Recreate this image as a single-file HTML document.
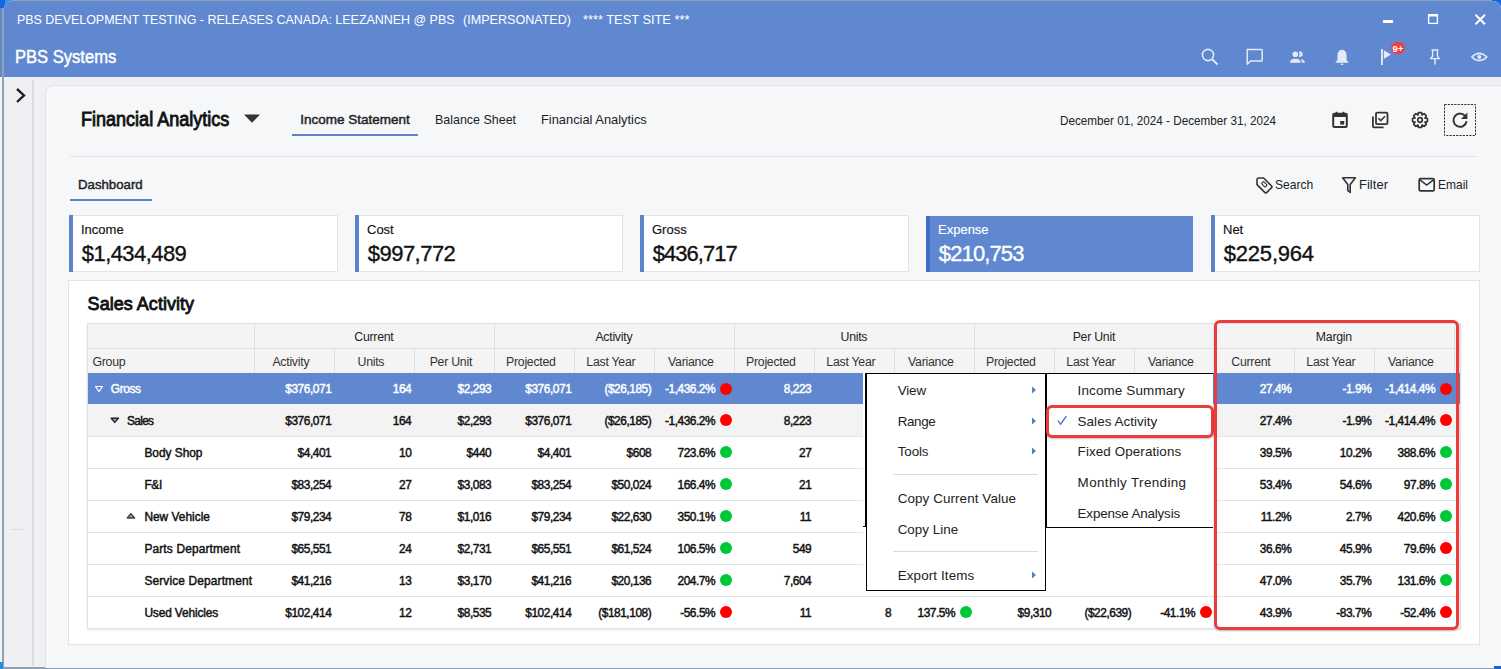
<!DOCTYPE html>
<html><head><meta charset="utf-8"><style>
html,body{margin:0;padding:0;}
body{width:1501px;height:669px;position:relative;overflow:hidden;font-family:"Liberation Sans",sans-serif;background:#f2f3f5}
.t{position:absolute;white-space:nowrap}
</style></head><body>
<div style="position:absolute;left:0px;top:0px;width:1501px;height:669px;background:#f2f3f5"></div>
<div style="position:absolute;left:0px;top:0px;width:1501px;height:669px;background:#f3f4f6"></div>
<div style="position:absolute;left:2px;top:0px;width:1499px;height:669px;background:#8fa2b2;border-top-left-radius:9px;border-top-right-radius:9px"></div>
<div style="position:absolute;left:0px;top:0px;width:11px;height:8px;background:#1565e0"></div>
<div style="position:absolute;left:5px;top:0px;width:6px;height:3px;background:#19a0f0"></div>
<div style="position:absolute;left:1492px;top:0px;width:9px;height:6px;background:#1565e0"></div>
<div style="position:absolute;left:4px;top:1px;width:1497px;height:666px;background:#eff0f3;border-top-left-radius:8px;border-top-right-radius:8px;overflow:hidden"></div>
<div style="position:absolute;left:4px;top:1px;width:1497px;height:76px;background:#6088d0;border-top-left-radius:8px;border-top-right-radius:8px"></div>
<div style="position:absolute;left:0px;top:8px;width:2px;height:69px;background:#6088d0"></div>
<div style="position:absolute;left:32px;top:80px;width:2px;height:586px;background:#dcdcdc"></div>
<div style="position:absolute;left:45px;top:85px;width:1470px;height:600px;background:#f6f7f9;border:1px solid #e0e2e6;border-radius:8px"></div>
<div class="t" style="left:16.50px;top:12.70px;font-size:13px;line-height:13px;font-weight:400;color:#fff;letter-spacing:0.000px;transform:scaleX(0.9573);transform-origin:0.00px 0;">PBS DEVELOPMENT TESTING - RELEASES CANADA: LEEZANNEH @ PBS</div>
<div class="t" style="left:463.00px;top:12.70px;font-size:13px;line-height:13px;font-weight:400;color:#fff;letter-spacing:0.000px;transform:scaleX(0.9669);transform-origin:0.00px 0;">(IMPERSONATED)</div>
<div class="t" style="left:583.00px;top:12.70px;font-size:13px;line-height:13px;font-weight:400;color:#fff;letter-spacing:0.000px;transform:scaleX(0.9861);transform-origin:0.00px 0;">**** TEST SITE ***</div>
<div class="t" style="left:14.70px;top:49.39px;font-size:17.5px;line-height:17.5px;font-weight:400;color:#fff;letter-spacing:0.000px;-webkit-text-stroke:0.7px #fff;transform:scaleX(0.9467);transform-origin:0.00px 0;-webkit-text-stroke:0.45px #fff;">PBS Systems</div>
<div class="t" style="left:81.00px;top:109.59px;font-size:19.5px;line-height:19.5px;font-weight:400;color:#111;letter-spacing:0.000px;-webkit-text-stroke:0.85px #111;transform:scaleX(0.9246);transform-origin:0.00px 0;">Financial Analytics</div>
<div class="t" style="left:300.30px;top:112.57px;font-size:13.5px;line-height:13.5px;font-weight:400;color:#222;letter-spacing:0.000px;transform:scaleX(1.0000);transform-origin:0.00px 0;-webkit-text-stroke:0.45px #222;">Income Statement</div>
<div class="t" style="left:435.00px;top:112.57px;font-size:13.5px;line-height:13.5px;font-weight:400;color:#222;letter-spacing:0.000px;transform:scaleX(0.9226);transform-origin:0.00px 0;">Balance Sheet</div>
<div class="t" style="left:540.80px;top:112.57px;font-size:13.5px;line-height:13.5px;font-weight:400;color:#222;letter-spacing:0.000px;transform:scaleX(0.9523);transform-origin:0.00px 0;">Financial Analytics</div>
<div style="position:absolute;left:292px;top:134px;width:126px;height:2px;background:#5b84cc"></div>
<div class="t" style="left:1060.00px;top:113.80px;font-size:13px;line-height:13px;font-weight:400;color:#222;letter-spacing:0.000px;transform:scaleX(0.9004);transform-origin:0.00px 0;">December 01, 2024 - December 31, 2024</div>
<div style="position:absolute;left:70px;top:156px;width:1408px;height:1px;background:#e3e4e8"></div>
<div class="t" style="left:78.40px;top:177.57px;font-size:13.5px;line-height:13.5px;font-weight:400;color:#222;letter-spacing:0.000px;transform:scaleX(0.9788);transform-origin:0.00px 0;-webkit-text-stroke:0.45px #222;">Dashboard</div>
<div style="position:absolute;left:70px;top:199px;width:82px;height:2px;background:#5b84cc"></div>
<div class="t" style="left:1274.70px;top:177.57px;font-size:13.5px;line-height:13.5px;font-weight:400;color:#222;letter-spacing:0.000px;transform:scaleX(0.8949);transform-origin:0.00px 0;">Search</div>
<div class="t" style="left:1359.00px;top:177.57px;font-size:13.5px;line-height:13.5px;font-weight:400;color:#222;letter-spacing:0.000px;transform:scaleX(0.9667);transform-origin:0.00px 0;">Filter</div>
<div class="t" style="left:1437.50px;top:177.57px;font-size:13.5px;line-height:13.5px;font-weight:400;color:#222;letter-spacing:0.000px;transform:scaleX(0.8876);transform-origin:0.00px 0;">Email</div>
<div style="position:absolute;left:69px;top:215px;width:269px;height:57px;background:#fff;border:1px solid #e3e4e8;box-sizing:border-box"></div>
<div style="position:absolute;left:69px;top:215px;width:4px;height:57px;background:#5b84cc"></div>
<div class="t" style="left:81.00px;top:223.00px;font-size:13px;line-height:13px;font-weight:400;color:#111;letter-spacing:0.000px;-webkit-text-stroke:0.15px #111;">Income</div>
<div class="t" style="left:81.80px;top:242.58px;font-size:22px;line-height:22px;font-weight:400;color:#111;letter-spacing:-0.567px;-webkit-text-stroke:0.35px #111;">$1,434,489</div>
<div style="position:absolute;left:355px;top:215px;width:268px;height:57px;background:#fff;border:1px solid #e3e4e8;box-sizing:border-box"></div>
<div style="position:absolute;left:355px;top:215px;width:4px;height:57px;background:#5b84cc"></div>
<div class="t" style="left:367.00px;top:223.00px;font-size:13px;line-height:13px;font-weight:400;color:#111;letter-spacing:0.000px;-webkit-text-stroke:0.15px #111;">Cost</div>
<div class="t" style="left:367.80px;top:242.58px;font-size:22px;line-height:22px;font-weight:400;color:#111;letter-spacing:-0.529px;-webkit-text-stroke:0.35px #111;">$997,772</div>
<div style="position:absolute;left:640px;top:215px;width:269px;height:57px;background:#fff;border:1px solid #e3e4e8;box-sizing:border-box"></div>
<div style="position:absolute;left:640px;top:215px;width:4px;height:57px;background:#5b84cc"></div>
<div class="t" style="left:652.00px;top:223.00px;font-size:13px;line-height:13px;font-weight:400;color:#111;letter-spacing:0.000px;-webkit-text-stroke:0.15px #111;">Gross</div>
<div class="t" style="left:652.80px;top:242.58px;font-size:22px;line-height:22px;font-weight:400;color:#111;letter-spacing:-0.971px;-webkit-text-stroke:0.35px #111;">$436,717</div>
<div style="position:absolute;left:926px;top:216px;width:267px;height:56px;background:#6088d0"></div>
<div style="position:absolute;left:926px;top:216px;width:4px;height:56px;background:#3f6cc4"></div>
<div class="t" style="left:938.00px;top:223.00px;font-size:13px;line-height:13px;font-weight:400;color:#fff;letter-spacing:0.000px;-webkit-text-stroke:0.15px #fff;">Expense</div>
<div class="t" style="left:938.80px;top:242.58px;font-size:22px;line-height:22px;font-weight:400;color:#fff;letter-spacing:-0.871px;-webkit-text-stroke:0.35px #fff;">$210,753</div>
<div style="position:absolute;left:1211px;top:215px;width:269px;height:57px;background:#fff;border:1px solid #e3e4e8;box-sizing:border-box"></div>
<div style="position:absolute;left:1211px;top:215px;width:4px;height:57px;background:#5b84cc"></div>
<div class="t" style="left:1223.00px;top:223.00px;font-size:13px;line-height:13px;font-weight:400;color:#111;letter-spacing:0.000px;-webkit-text-stroke:0.15px #111;">Net</div>
<div class="t" style="left:1223.80px;top:242.58px;font-size:22px;line-height:22px;font-weight:400;color:#111;letter-spacing:-0.214px;-webkit-text-stroke:0.35px #111;">$225,964</div>
<div style="position:absolute;left:68px;top:280px;width:1412px;height:364.5px;background:#fff;border:1px solid #e3e4e8;box-sizing:border-box"></div>
<div class="t" style="left:87.60px;top:294.96px;font-size:18px;line-height:18px;font-weight:400;color:#111;letter-spacing:0.031px;-webkit-text-stroke:0.85px #111;">Sales Activity</div>
<div style="position:absolute;left:87px;top:323px;width:1374px;height:306px;background:#fff;border:1px solid #e2e2e2;box-sizing:border-box;box-shadow:0 1px 2px rgba(0,0,0,0.10)"></div>
<div style="position:absolute;left:88px;top:324px;width:1372px;height:49px;background:#f5f4f4"></div>
<div style="position:absolute;left:88px;top:348px;width:1372px;height:1px;background:#e0e0e0"></div>
<div style="position:absolute;left:254px;top:324px;width:1px;height:49px;background:#e0e0e0"></div>
<div style="position:absolute;left:494px;top:324px;width:1px;height:49px;background:#e0e0e0"></div>
<div style="position:absolute;left:734px;top:324px;width:1px;height:49px;background:#e0e0e0"></div>
<div style="position:absolute;left:974px;top:324px;width:1px;height:49px;background:#e0e0e0"></div>
<div style="position:absolute;left:1214px;top:324px;width:1px;height:49px;background:#e0e0e0"></div>
<div style="position:absolute;left:334px;top:349px;width:1px;height:24px;background:#e0e0e0"></div>
<div style="position:absolute;left:414px;top:349px;width:1px;height:24px;background:#e0e0e0"></div>
<div style="position:absolute;left:574px;top:349px;width:1px;height:24px;background:#e0e0e0"></div>
<div style="position:absolute;left:654px;top:349px;width:1px;height:24px;background:#e0e0e0"></div>
<div style="position:absolute;left:814px;top:349px;width:1px;height:24px;background:#e0e0e0"></div>
<div style="position:absolute;left:894px;top:349px;width:1px;height:24px;background:#e0e0e0"></div>
<div style="position:absolute;left:1054px;top:349px;width:1px;height:24px;background:#e0e0e0"></div>
<div style="position:absolute;left:1134px;top:349px;width:1px;height:24px;background:#e0e0e0"></div>
<div style="position:absolute;left:1294px;top:349px;width:1px;height:24px;background:#e0e0e0"></div>
<div style="position:absolute;left:1374px;top:349px;width:1px;height:24px;background:#e0e0e0"></div>
<div style="position:absolute;left:1454px;top:324px;width:1px;height:49px;background:#e0e0e0"></div>
<div class="t" style="left:354.25px;top:331.09px;font-size:12.3px;line-height:12.3px;font-weight:400;color:#222;letter-spacing:-0.250px;">Current</div>
<div class="t" style="left:595.38px;top:331.09px;font-size:12.3px;line-height:12.3px;font-weight:400;color:#222;letter-spacing:-0.250px;">Activity</div>
<div class="t" style="left:840.50px;top:331.09px;font-size:12.3px;line-height:12.3px;font-weight:400;color:#222;letter-spacing:-0.250px;">Units</div>
<div class="t" style="left:1072.67px;top:331.09px;font-size:12.3px;line-height:12.3px;font-weight:400;color:#222;letter-spacing:-0.250px;">Per Unit</div>
<div class="t" style="left:1315.83px;top:331.09px;font-size:12.3px;line-height:12.3px;font-weight:400;color:#222;letter-spacing:-0.250px;">Margin</div>
<div class="t" style="left:272.38px;top:356.09px;font-size:12.3px;line-height:12.3px;font-weight:400;color:#333;letter-spacing:-0.250px;">Activity</div>
<div class="t" style="left:357.50px;top:356.09px;font-size:12.3px;line-height:12.3px;font-weight:400;color:#333;letter-spacing:-0.250px;">Units</div>
<div class="t" style="left:429.68px;top:356.09px;font-size:12.3px;line-height:12.3px;font-weight:400;color:#333;letter-spacing:-0.250px;">Per Unit</div>
<div class="t" style="left:506.00px;top:356.09px;font-size:12.3px;line-height:12.3px;font-weight:400;color:#333;letter-spacing:-0.250px;">Projected</div>
<div class="t" style="left:586.35px;top:356.09px;font-size:12.3px;line-height:12.3px;font-weight:400;color:#333;letter-spacing:-0.250px;">Last Year</div>
<div class="t" style="left:668.08px;top:356.09px;font-size:12.3px;line-height:12.3px;font-weight:400;color:#333;letter-spacing:-0.250px;">Variance</div>
<div class="t" style="left:746.00px;top:356.09px;font-size:12.3px;line-height:12.3px;font-weight:400;color:#333;letter-spacing:-0.250px;">Projected</div>
<div class="t" style="left:826.35px;top:356.09px;font-size:12.3px;line-height:12.3px;font-weight:400;color:#333;letter-spacing:-0.250px;">Last Year</div>
<div class="t" style="left:908.08px;top:356.09px;font-size:12.3px;line-height:12.3px;font-weight:400;color:#333;letter-spacing:-0.250px;">Variance</div>
<div class="t" style="left:986.00px;top:356.09px;font-size:12.3px;line-height:12.3px;font-weight:400;color:#333;letter-spacing:-0.250px;">Projected</div>
<div class="t" style="left:1066.35px;top:356.09px;font-size:12.3px;line-height:12.3px;font-weight:400;color:#333;letter-spacing:-0.250px;">Last Year</div>
<div class="t" style="left:1148.08px;top:356.09px;font-size:12.3px;line-height:12.3px;font-weight:400;color:#333;letter-spacing:-0.250px;">Variance</div>
<div class="t" style="left:1231.25px;top:356.09px;font-size:12.3px;line-height:12.3px;font-weight:400;color:#333;letter-spacing:-0.250px;">Current</div>
<div class="t" style="left:1306.35px;top:356.09px;font-size:12.3px;line-height:12.3px;font-weight:400;color:#333;letter-spacing:-0.250px;">Last Year</div>
<div class="t" style="left:1388.08px;top:356.09px;font-size:12.3px;line-height:12.3px;font-weight:400;color:#333;letter-spacing:-0.250px;">Variance</div>
<div class="t" style="left:92.40px;top:356.09px;font-size:12.3px;line-height:12.3px;font-weight:400;color:#333;letter-spacing:-0.250px;">Group</div>
<div style="position:absolute;left:88px;top:373px;width:1372px;height:31px;background:#6088d0"></div>
<div class="t" style="left:110.80px;top:384.13px;font-size:11.9px;line-height:11.9px;font-weight:400;color:#fff;letter-spacing:-0.375px;-webkit-text-stroke:0.45px #fff;">Gross</div>
<svg style="position:absolute;left:95.3px;top:385.5px" width="8" height="6"><path d="M0.5 0.5 L7.5 0.5 L4 5.5 Z" fill="none" stroke="#fff" stroke-width="1.2"/></svg>
<div class="t" style="right:1169.71px;top:384.13px;font-size:11.9px;line-height:11.9px;font-weight:400;color:#fff;letter-spacing:-0.450px;-webkit-text-stroke:0.45px #fff;">$376,071</div>
<div class="t" style="right:1089.79px;top:384.13px;font-size:11.9px;line-height:11.9px;font-weight:400;color:#fff;letter-spacing:-0.450px;-webkit-text-stroke:0.45px #fff;">164</div>
<div class="t" style="right:1009.75px;top:384.13px;font-size:11.9px;line-height:11.9px;font-weight:400;color:#fff;letter-spacing:-0.450px;-webkit-text-stroke:0.45px #fff;">$2,293</div>
<div class="t" style="right:929.71px;top:384.13px;font-size:11.9px;line-height:11.9px;font-weight:400;color:#fff;letter-spacing:-0.450px;-webkit-text-stroke:0.45px #fff;">$376,071</div>
<div class="t" style="right:849.71px;top:384.13px;font-size:11.9px;line-height:11.9px;font-weight:400;color:#fff;letter-spacing:-0.450px;-webkit-text-stroke:0.45px #fff;">($26,185)</div>
<div style="position:absolute;left:720px;top:382.5px;width:12px;height:12px;border-radius:50%;background:#ff0000"></div>
<div class="t" style="right:785.90px;top:384.13px;font-size:11.9px;line-height:11.9px;font-weight:400;color:#fff;letter-spacing:-0.450px;-webkit-text-stroke:0.45px #fff;">-1,436.2%</div>
<div class="t" style="right:689.77px;top:384.13px;font-size:11.9px;line-height:11.9px;font-weight:400;color:#fff;letter-spacing:-0.450px;-webkit-text-stroke:0.45px #fff;">8,223</div>
<div class="t" style="right:209.71px;top:384.13px;font-size:11.9px;line-height:11.9px;font-weight:400;color:#fff;letter-spacing:-0.450px;-webkit-text-stroke:0.45px #fff;">27.4%</div>
<div class="t" style="right:129.76px;top:384.13px;font-size:11.9px;line-height:11.9px;font-weight:400;color:#fff;letter-spacing:-0.450px;-webkit-text-stroke:0.45px #fff;">-1.9%</div>
<div style="position:absolute;left:1440px;top:382.5px;width:12px;height:12px;border-radius:50%;background:#ff0000"></div>
<div class="t" style="right:65.90px;top:384.13px;font-size:11.9px;line-height:11.9px;font-weight:400;color:#fff;letter-spacing:-0.450px;-webkit-text-stroke:0.45px #fff;">-1,414.4%</div>
<div style="position:absolute;left:88px;top:404px;width:1372px;height:32px;background:#f3f3f3"></div>
<div style="position:absolute;left:88px;top:436px;width:1372px;height:1px;background:#e3e3e3"></div>
<div class="t" style="left:127.00px;top:415.53px;font-size:11.9px;line-height:11.9px;font-weight:400;color:#111;letter-spacing:-0.675px;-webkit-text-stroke:0.45px #111;">Sales</div>
<svg style="position:absolute;left:109.9px;top:416.8px" width="10" height="7"><path d="M1.2 1.2 L8.4 1.2 L4.8 5.4 Z" fill="#aaa" stroke="#222" stroke-width="1.4" stroke-linejoin="round"/></svg>
<div class="t" style="right:1169.71px;top:415.53px;font-size:11.9px;line-height:11.9px;font-weight:400;color:#111;letter-spacing:-0.450px;-webkit-text-stroke:0.45px #111;">$376,071</div>
<div class="t" style="right:1089.79px;top:415.53px;font-size:11.9px;line-height:11.9px;font-weight:400;color:#111;letter-spacing:-0.450px;-webkit-text-stroke:0.45px #111;">164</div>
<div class="t" style="right:1009.75px;top:415.53px;font-size:11.9px;line-height:11.9px;font-weight:400;color:#111;letter-spacing:-0.450px;-webkit-text-stroke:0.45px #111;">$2,293</div>
<div class="t" style="right:929.71px;top:415.53px;font-size:11.9px;line-height:11.9px;font-weight:400;color:#111;letter-spacing:-0.450px;-webkit-text-stroke:0.45px #111;">$376,071</div>
<div class="t" style="right:849.71px;top:415.53px;font-size:11.9px;line-height:11.9px;font-weight:400;color:#111;letter-spacing:-0.450px;-webkit-text-stroke:0.45px #111;">($26,185)</div>
<div style="position:absolute;left:720px;top:414.0px;width:12px;height:12px;border-radius:50%;background:#ff0000"></div>
<div class="t" style="right:785.90px;top:415.53px;font-size:11.9px;line-height:11.9px;font-weight:400;color:#111;letter-spacing:-0.450px;-webkit-text-stroke:0.45px #111;">-1,436.2%</div>
<div class="t" style="right:689.77px;top:415.53px;font-size:11.9px;line-height:11.9px;font-weight:400;color:#111;letter-spacing:-0.450px;-webkit-text-stroke:0.45px #111;">8,223</div>
<div class="t" style="right:209.71px;top:415.53px;font-size:11.9px;line-height:11.9px;font-weight:400;color:#111;letter-spacing:-0.450px;-webkit-text-stroke:0.45px #111;">27.4%</div>
<div class="t" style="right:129.76px;top:415.53px;font-size:11.9px;line-height:11.9px;font-weight:400;color:#111;letter-spacing:-0.450px;-webkit-text-stroke:0.45px #111;">-1.9%</div>
<div style="position:absolute;left:1440px;top:414.0px;width:12px;height:12px;border-radius:50%;background:#ff0000"></div>
<div class="t" style="right:65.90px;top:415.53px;font-size:11.9px;line-height:11.9px;font-weight:400;color:#111;letter-spacing:-0.450px;-webkit-text-stroke:0.45px #111;">-1,414.4%</div>
<div style="position:absolute;left:88px;top:468px;width:1372px;height:1px;background:#e3e3e3"></div>
<div class="t" style="left:144.40px;top:447.53px;font-size:11.9px;line-height:11.9px;font-weight:400;color:#111;letter-spacing:-0.013px;-webkit-text-stroke:0.45px #111;">Body Shop</div>
<div class="t" style="right:1169.75px;top:447.53px;font-size:11.9px;line-height:11.9px;font-weight:400;color:#111;letter-spacing:-0.450px;-webkit-text-stroke:0.45px #111;">$4,401</div>
<div class="t" style="right:1089.71px;top:447.53px;font-size:11.9px;line-height:11.9px;font-weight:400;color:#111;letter-spacing:-0.450px;-webkit-text-stroke:0.45px #111;">10</div>
<div class="t" style="right:1009.77px;top:447.53px;font-size:11.9px;line-height:11.9px;font-weight:400;color:#111;letter-spacing:-0.450px;-webkit-text-stroke:0.45px #111;">$440</div>
<div class="t" style="right:929.75px;top:447.53px;font-size:11.9px;line-height:11.9px;font-weight:400;color:#111;letter-spacing:-0.450px;-webkit-text-stroke:0.45px #111;">$4,401</div>
<div class="t" style="right:849.77px;top:447.53px;font-size:11.9px;line-height:11.9px;font-weight:400;color:#111;letter-spacing:-0.450px;-webkit-text-stroke:0.45px #111;">$608</div>
<div style="position:absolute;left:720px;top:446.0px;width:12px;height:12px;border-radius:50%;background:#00c832"></div>
<div class="t" style="right:785.89px;top:447.53px;font-size:11.9px;line-height:11.9px;font-weight:400;color:#111;letter-spacing:-0.450px;-webkit-text-stroke:0.45px #111;">723.6%</div>
<div class="t" style="right:689.71px;top:447.53px;font-size:11.9px;line-height:11.9px;font-weight:400;color:#111;letter-spacing:-0.450px;-webkit-text-stroke:0.45px #111;">27</div>
<div class="t" style="right:209.71px;top:447.53px;font-size:11.9px;line-height:11.9px;font-weight:400;color:#111;letter-spacing:-0.450px;-webkit-text-stroke:0.45px #111;">39.5%</div>
<div class="t" style="right:129.71px;top:447.53px;font-size:11.9px;line-height:11.9px;font-weight:400;color:#111;letter-spacing:-0.450px;-webkit-text-stroke:0.45px #111;">10.2%</div>
<div style="position:absolute;left:1440px;top:446.0px;width:12px;height:12px;border-radius:50%;background:#00c832"></div>
<div class="t" style="right:65.89px;top:447.53px;font-size:11.9px;line-height:11.9px;font-weight:400;color:#111;letter-spacing:-0.450px;-webkit-text-stroke:0.45px #111;">388.6%</div>
<div style="position:absolute;left:88px;top:500px;width:1372px;height:1px;background:#e3e3e3"></div>
<div class="t" style="left:144.40px;top:479.53px;font-size:11.9px;line-height:11.9px;font-weight:400;color:#111;letter-spacing:-0.300px;-webkit-text-stroke:0.45px #111;">F&amp;I</div>
<div class="t" style="right:1169.73px;top:479.53px;font-size:11.9px;line-height:11.9px;font-weight:400;color:#111;letter-spacing:-0.450px;-webkit-text-stroke:0.45px #111;">$83,254</div>
<div class="t" style="right:1089.71px;top:479.53px;font-size:11.9px;line-height:11.9px;font-weight:400;color:#111;letter-spacing:-0.450px;-webkit-text-stroke:0.45px #111;">27</div>
<div class="t" style="right:1009.75px;top:479.53px;font-size:11.9px;line-height:11.9px;font-weight:400;color:#111;letter-spacing:-0.450px;-webkit-text-stroke:0.45px #111;">$3,083</div>
<div class="t" style="right:929.73px;top:479.53px;font-size:11.9px;line-height:11.9px;font-weight:400;color:#111;letter-spacing:-0.450px;-webkit-text-stroke:0.45px #111;">$83,254</div>
<div class="t" style="right:849.73px;top:479.53px;font-size:11.9px;line-height:11.9px;font-weight:400;color:#111;letter-spacing:-0.450px;-webkit-text-stroke:0.45px #111;">$50,024</div>
<div style="position:absolute;left:720px;top:478.0px;width:12px;height:12px;border-radius:50%;background:#00c832"></div>
<div class="t" style="right:785.89px;top:479.53px;font-size:11.9px;line-height:11.9px;font-weight:400;color:#111;letter-spacing:-0.450px;-webkit-text-stroke:0.45px #111;">166.4%</div>
<div class="t" style="right:689.71px;top:479.53px;font-size:11.9px;line-height:11.9px;font-weight:400;color:#111;letter-spacing:-0.450px;-webkit-text-stroke:0.45px #111;">21</div>
<div class="t" style="right:209.71px;top:479.53px;font-size:11.9px;line-height:11.9px;font-weight:400;color:#111;letter-spacing:-0.450px;-webkit-text-stroke:0.45px #111;">53.4%</div>
<div class="t" style="right:129.71px;top:479.53px;font-size:11.9px;line-height:11.9px;font-weight:400;color:#111;letter-spacing:-0.450px;-webkit-text-stroke:0.45px #111;">54.6%</div>
<div style="position:absolute;left:1440px;top:478.0px;width:12px;height:12px;border-radius:50%;background:#00c832"></div>
<div class="t" style="right:65.81px;top:479.53px;font-size:11.9px;line-height:11.9px;font-weight:400;color:#111;letter-spacing:-0.450px;-webkit-text-stroke:0.45px #111;">97.8%</div>
<div style="position:absolute;left:88px;top:532px;width:1372px;height:1px;background:#e3e3e3"></div>
<div class="t" style="left:144.40px;top:511.53px;font-size:11.9px;line-height:11.9px;font-weight:400;color:#111;letter-spacing:0.010px;-webkit-text-stroke:0.45px #111;">New Vehicle</div>
<svg style="position:absolute;left:126.2px;top:512.2px" width="10" height="8"><path d="M1.2 6 L8.6 6 L4.9 1.6 Z" fill="#999" stroke="#444" stroke-width="1.4" stroke-linejoin="round"/></svg>
<div class="t" style="right:1169.73px;top:511.53px;font-size:11.9px;line-height:11.9px;font-weight:400;color:#111;letter-spacing:-0.450px;-webkit-text-stroke:0.45px #111;">$79,234</div>
<div class="t" style="right:1089.71px;top:511.53px;font-size:11.9px;line-height:11.9px;font-weight:400;color:#111;letter-spacing:-0.450px;-webkit-text-stroke:0.45px #111;">78</div>
<div class="t" style="right:1009.75px;top:511.53px;font-size:11.9px;line-height:11.9px;font-weight:400;color:#111;letter-spacing:-0.450px;-webkit-text-stroke:0.45px #111;">$1,016</div>
<div class="t" style="right:929.73px;top:511.53px;font-size:11.9px;line-height:11.9px;font-weight:400;color:#111;letter-spacing:-0.450px;-webkit-text-stroke:0.45px #111;">$79,234</div>
<div class="t" style="right:849.73px;top:511.53px;font-size:11.9px;line-height:11.9px;font-weight:400;color:#111;letter-spacing:-0.450px;-webkit-text-stroke:0.45px #111;">$22,630</div>
<div style="position:absolute;left:720px;top:510.0px;width:12px;height:12px;border-radius:50%;background:#00c832"></div>
<div class="t" style="right:785.89px;top:511.53px;font-size:11.9px;line-height:11.9px;font-weight:400;color:#111;letter-spacing:-0.450px;-webkit-text-stroke:0.45px #111;">350.1%</div>
<div class="t" style="right:689.80px;top:511.53px;font-size:11.9px;line-height:11.9px;font-weight:400;color:#111;letter-spacing:-0.450px;-webkit-text-stroke:0.45px #111;">11</div>
<div class="t" style="right:209.79px;top:511.53px;font-size:11.9px;line-height:11.9px;font-weight:400;color:#111;letter-spacing:-0.450px;-webkit-text-stroke:0.45px #111;">11.2%</div>
<div class="t" style="right:129.72px;top:511.53px;font-size:11.9px;line-height:11.9px;font-weight:400;color:#111;letter-spacing:-0.450px;-webkit-text-stroke:0.45px #111;">2.7%</div>
<div style="position:absolute;left:1440px;top:510.0px;width:12px;height:12px;border-radius:50%;background:#00c832"></div>
<div class="t" style="right:65.89px;top:511.53px;font-size:11.9px;line-height:11.9px;font-weight:400;color:#111;letter-spacing:-0.450px;-webkit-text-stroke:0.45px #111;">420.6%</div>
<div style="position:absolute;left:88px;top:564px;width:1372px;height:1px;background:#e3e3e3"></div>
<div class="t" style="left:144.40px;top:543.53px;font-size:11.9px;line-height:11.9px;font-weight:400;color:#111;letter-spacing:0.160px;-webkit-text-stroke:0.45px #111;">Parts Department</div>
<div class="t" style="right:1169.73px;top:543.53px;font-size:11.9px;line-height:11.9px;font-weight:400;color:#111;letter-spacing:-0.450px;-webkit-text-stroke:0.45px #111;">$65,551</div>
<div class="t" style="right:1089.71px;top:543.53px;font-size:11.9px;line-height:11.9px;font-weight:400;color:#111;letter-spacing:-0.450px;-webkit-text-stroke:0.45px #111;">24</div>
<div class="t" style="right:1009.75px;top:543.53px;font-size:11.9px;line-height:11.9px;font-weight:400;color:#111;letter-spacing:-0.450px;-webkit-text-stroke:0.45px #111;">$2,731</div>
<div class="t" style="right:929.73px;top:543.53px;font-size:11.9px;line-height:11.9px;font-weight:400;color:#111;letter-spacing:-0.450px;-webkit-text-stroke:0.45px #111;">$65,551</div>
<div class="t" style="right:849.73px;top:543.53px;font-size:11.9px;line-height:11.9px;font-weight:400;color:#111;letter-spacing:-0.450px;-webkit-text-stroke:0.45px #111;">$61,524</div>
<div style="position:absolute;left:720px;top:542.0px;width:12px;height:12px;border-radius:50%;background:#00c832"></div>
<div class="t" style="right:785.89px;top:543.53px;font-size:11.9px;line-height:11.9px;font-weight:400;color:#111;letter-spacing:-0.450px;-webkit-text-stroke:0.45px #111;">106.5%</div>
<div class="t" style="right:689.79px;top:543.53px;font-size:11.9px;line-height:11.9px;font-weight:400;color:#111;letter-spacing:-0.450px;-webkit-text-stroke:0.45px #111;">549</div>
<div class="t" style="right:209.71px;top:543.53px;font-size:11.9px;line-height:11.9px;font-weight:400;color:#111;letter-spacing:-0.450px;-webkit-text-stroke:0.45px #111;">36.6%</div>
<div class="t" style="right:129.71px;top:543.53px;font-size:11.9px;line-height:11.9px;font-weight:400;color:#111;letter-spacing:-0.450px;-webkit-text-stroke:0.45px #111;">45.9%</div>
<div style="position:absolute;left:1440px;top:542.0px;width:12px;height:12px;border-radius:50%;background:#ff0000"></div>
<div class="t" style="right:65.81px;top:543.53px;font-size:11.9px;line-height:11.9px;font-weight:400;color:#111;letter-spacing:-0.450px;-webkit-text-stroke:0.45px #111;">79.6%</div>
<div style="position:absolute;left:88px;top:596px;width:1372px;height:1px;background:#e3e3e3"></div>
<div class="t" style="left:144.40px;top:575.53px;font-size:11.9px;line-height:11.9px;font-weight:400;color:#111;letter-spacing:0.147px;-webkit-text-stroke:0.45px #111;">Service Department</div>
<div class="t" style="right:1169.73px;top:575.53px;font-size:11.9px;line-height:11.9px;font-weight:400;color:#111;letter-spacing:-0.450px;-webkit-text-stroke:0.45px #111;">$41,216</div>
<div class="t" style="right:1089.71px;top:575.53px;font-size:11.9px;line-height:11.9px;font-weight:400;color:#111;letter-spacing:-0.450px;-webkit-text-stroke:0.45px #111;">13</div>
<div class="t" style="right:1009.75px;top:575.53px;font-size:11.9px;line-height:11.9px;font-weight:400;color:#111;letter-spacing:-0.450px;-webkit-text-stroke:0.45px #111;">$3,170</div>
<div class="t" style="right:929.73px;top:575.53px;font-size:11.9px;line-height:11.9px;font-weight:400;color:#111;letter-spacing:-0.450px;-webkit-text-stroke:0.45px #111;">$41,216</div>
<div class="t" style="right:849.73px;top:575.53px;font-size:11.9px;line-height:11.9px;font-weight:400;color:#111;letter-spacing:-0.450px;-webkit-text-stroke:0.45px #111;">$20,136</div>
<div style="position:absolute;left:720px;top:574.0px;width:12px;height:12px;border-radius:50%;background:#00c832"></div>
<div class="t" style="right:785.89px;top:575.53px;font-size:11.9px;line-height:11.9px;font-weight:400;color:#111;letter-spacing:-0.450px;-webkit-text-stroke:0.45px #111;">204.7%</div>
<div class="t" style="right:689.77px;top:575.53px;font-size:11.9px;line-height:11.9px;font-weight:400;color:#111;letter-spacing:-0.450px;-webkit-text-stroke:0.45px #111;">7,604</div>
<div class="t" style="right:209.71px;top:575.53px;font-size:11.9px;line-height:11.9px;font-weight:400;color:#111;letter-spacing:-0.450px;-webkit-text-stroke:0.45px #111;">47.0%</div>
<div class="t" style="right:129.71px;top:575.53px;font-size:11.9px;line-height:11.9px;font-weight:400;color:#111;letter-spacing:-0.450px;-webkit-text-stroke:0.45px #111;">35.7%</div>
<div style="position:absolute;left:1440px;top:574.0px;width:12px;height:12px;border-radius:50%;background:#00c832"></div>
<div class="t" style="right:65.89px;top:575.53px;font-size:11.9px;line-height:11.9px;font-weight:400;color:#111;letter-spacing:-0.450px;-webkit-text-stroke:0.45px #111;">131.6%</div>
<div style="position:absolute;left:88px;top:628px;width:1372px;height:1px;background:#e3e3e3"></div>
<div class="t" style="left:144.40px;top:607.53px;font-size:11.9px;line-height:11.9px;font-weight:400;color:#111;letter-spacing:-0.133px;-webkit-text-stroke:0.45px #111;">Used Vehicles</div>
<div class="t" style="right:1169.71px;top:607.53px;font-size:11.9px;line-height:11.9px;font-weight:400;color:#111;letter-spacing:-0.450px;-webkit-text-stroke:0.45px #111;">$102,414</div>
<div class="t" style="right:1089.71px;top:607.53px;font-size:11.9px;line-height:11.9px;font-weight:400;color:#111;letter-spacing:-0.450px;-webkit-text-stroke:0.45px #111;">12</div>
<div class="t" style="right:1009.75px;top:607.53px;font-size:11.9px;line-height:11.9px;font-weight:400;color:#111;letter-spacing:-0.450px;-webkit-text-stroke:0.45px #111;">$8,535</div>
<div class="t" style="right:929.71px;top:607.53px;font-size:11.9px;line-height:11.9px;font-weight:400;color:#111;letter-spacing:-0.450px;-webkit-text-stroke:0.45px #111;">$102,414</div>
<div class="t" style="right:849.79px;top:607.53px;font-size:11.9px;line-height:11.9px;font-weight:400;color:#111;letter-spacing:-0.450px;-webkit-text-stroke:0.45px #111;">($181,108)</div>
<div style="position:absolute;left:720px;top:606.0px;width:12px;height:12px;border-radius:50%;background:#ff0000"></div>
<div class="t" style="right:785.84px;top:607.53px;font-size:11.9px;line-height:11.9px;font-weight:400;color:#111;letter-spacing:-0.450px;-webkit-text-stroke:0.45px #111;">-56.5%</div>
<div class="t" style="right:689.80px;top:607.53px;font-size:11.9px;line-height:11.9px;font-weight:400;color:#111;letter-spacing:-0.450px;-webkit-text-stroke:0.45px #111;">11</div>
<div class="t" style="right:609.73px;top:607.53px;font-size:11.9px;line-height:11.9px;font-weight:400;color:#111;letter-spacing:-0.450px;-webkit-text-stroke:0.45px #111;">8</div>
<div style="position:absolute;left:960px;top:606.0px;width:12px;height:12px;border-radius:50%;background:#00c832"></div>
<div class="t" style="right:545.89px;top:607.53px;font-size:11.9px;line-height:11.9px;font-weight:400;color:#111;letter-spacing:-0.450px;-webkit-text-stroke:0.45px #111;">137.5%</div>
<div class="t" style="right:449.75px;top:607.53px;font-size:11.9px;line-height:11.9px;font-weight:400;color:#111;letter-spacing:-0.450px;-webkit-text-stroke:0.45px #111;">$9,310</div>
<div class="t" style="right:369.71px;top:607.53px;font-size:11.9px;line-height:11.9px;font-weight:400;color:#111;letter-spacing:-0.450px;-webkit-text-stroke:0.45px #111;">($22,639)</div>
<div style="position:absolute;left:1200px;top:606.0px;width:12px;height:12px;border-radius:50%;background:#ff0000"></div>
<div class="t" style="right:305.84px;top:607.53px;font-size:11.9px;line-height:11.9px;font-weight:400;color:#111;letter-spacing:-0.450px;-webkit-text-stroke:0.45px #111;">-41.1%</div>
<div class="t" style="right:209.71px;top:607.53px;font-size:11.9px;line-height:11.9px;font-weight:400;color:#111;letter-spacing:-0.450px;-webkit-text-stroke:0.45px #111;">43.9%</div>
<div class="t" style="right:129.74px;top:607.53px;font-size:11.9px;line-height:11.9px;font-weight:400;color:#111;letter-spacing:-0.450px;-webkit-text-stroke:0.45px #111;">-83.7%</div>
<div style="position:absolute;left:1440px;top:606.0px;width:12px;height:12px;border-radius:50%;background:#ff0000"></div>
<div class="t" style="right:65.84px;top:607.53px;font-size:11.9px;line-height:11.9px;font-weight:400;color:#111;letter-spacing:-0.450px;-webkit-text-stroke:0.45px #111;">-52.4%</div>
<div style="position:absolute;left:863px;top:373px;width:350px;height:218px;background:#fff"></div>
<div style="position:absolute;left:866px;top:373px;width:180px;height:218px;border:1px solid #000;box-sizing:border-box;background:#fff"></div>
<div style="position:absolute;left:865px;top:373px;width:1px;height:154px;background:#000"></div>
<div style="position:absolute;left:863px;top:526px;width:3px;height:1px;background:#000"></div>
<div style="position:absolute;left:1045px;top:373px;width:168px;height:155px;border-top:1px solid #000;border-bottom:1px solid #000;border-left:2px solid #000;box-sizing:border-box;background:#fff"></div>
<div class="t" style="left:897.70px;top:384.26px;font-size:13.4px;line-height:13.4px;font-weight:400;color:#222;letter-spacing:-0.133px;">View</div>
<div class="t" style="left:897.70px;top:415.06px;font-size:13.4px;line-height:13.4px;font-weight:400;color:#222;letter-spacing:-0.350px;">Range</div>
<div class="t" style="left:897.70px;top:445.06px;font-size:13.4px;line-height:13.4px;font-weight:400;color:#222;letter-spacing:-0.100px;">Tools</div>
<div class="t" style="left:897.70px;top:492.16px;font-size:13.4px;line-height:13.4px;font-weight:400;color:#222;letter-spacing:0.100px;">Copy Current Value</div>
<div class="t" style="left:897.70px;top:523.06px;font-size:13.4px;line-height:13.4px;font-weight:400;color:#222;letter-spacing:0.013px;">Copy Line</div>
<div class="t" style="left:897.70px;top:568.76px;font-size:13.4px;line-height:13.4px;font-weight:400;color:#222;letter-spacing:0.127px;">Export Items</div>
<svg style="position:absolute;left:1032px;top:386.3px" width="5" height="8"><path d="M0 0.5 L4 4 L0 7.5 Z" fill="#4f7fd0"/></svg>
<svg style="position:absolute;left:1032px;top:416.9px" width="5" height="8"><path d="M0 0.5 L4 4 L0 7.5 Z" fill="#4f7fd0"/></svg>
<svg style="position:absolute;left:1032px;top:447.1px" width="5" height="8"><path d="M0 0.5 L4 4 L0 7.5 Z" fill="#4f7fd0"/></svg>
<svg style="position:absolute;left:1032px;top:570.8px" width="5" height="8"><path d="M0 0.5 L4 4 L0 7.5 Z" fill="#4f7fd0"/></svg>
<div style="position:absolute;left:893px;top:474px;width:145px;height:1px;background:#d9d9d9"></div>
<div style="position:absolute;left:893px;top:551px;width:145px;height:1px;background:#d9d9d9"></div>
<div class="t" style="left:1077.60px;top:384.26px;font-size:13.4px;line-height:13.4px;font-weight:400;color:#222;letter-spacing:0.162px;">Income Summary</div>
<div class="t" style="left:1077.60px;top:415.06px;font-size:13.4px;line-height:13.4px;font-weight:400;color:#222;letter-spacing:0.062px;">Sales Activity</div>
<div class="t" style="left:1077.60px;top:445.06px;font-size:13.4px;line-height:13.4px;font-weight:400;color:#222;letter-spacing:0.107px;">Fixed Operations</div>
<div class="t" style="left:1077.60px;top:475.66px;font-size:13.4px;line-height:13.4px;font-weight:400;color:#222;letter-spacing:0.380px;">Monthly Trending</div>
<div class="t" style="left:1077.60px;top:506.56px;font-size:13.4px;line-height:13.4px;font-weight:400;color:#222;letter-spacing:-0.160px;">Expense Analysis</div>
<div style="position:absolute;left:1046px;top:405px;width:168px;height:33px;border:3px solid #ea3c3c;border-radius:6px;box-sizing:border-box;box-shadow:0 1px 2px rgba(0,0,0,0.25)"></div>
<div style="position:absolute;left:1214px;top:320px;width:245px;height:310px;border:3px solid #ea3c3c;border-radius:6px;box-sizing:border-box;box-shadow:0 1px 2px rgba(0,0,0,0.25)"></div>
<svg style="position:absolute;left:1380px;top:15px;" width="16" height="10" viewBox="0 0 16 10"><rect x="3" y="5" width="10" height="3" fill="#fff"/></svg>
<svg style="position:absolute;left:1425px;top:12px;" width="16" height="16" viewBox="0 0 16 16"><rect x="3.6" y="2.6" width="8.8" height="8.8" fill="none" stroke="#fff" stroke-width="1.3"/><rect x="3" y="2" width="10" height="2.5" fill="#fff"/></svg>
<svg style="position:absolute;left:1472px;top:11px;" width="16" height="16" viewBox="0 0 16 16"><path d="M3.5 3.8 L13 13.2 M13 3.8 L3.5 13.2" stroke="#fff" stroke-width="2"/></svg>
<svg style="position:absolute;left:1200px;top:47px;" width="20" height="20" viewBox="0 0 20 20"><circle cx="8" cy="8" r="5.6" fill="none" stroke="#e3e9f6" stroke-width="1.6"/><path d="M12 12 L17.5 17.5" stroke="#e3e9f6" stroke-width="1.8"/></svg>
<svg style="position:absolute;left:1244px;top:47px;" width="20" height="20" viewBox="0 0 20 20"><path d="M3.2 2.6 H17.4 Q18.2 2.6 18.2 3.4 V13.2 Q18.2 14 17.4 14 H6.5 L3.2 17.3 Z" fill="none" stroke="#e3e9f6" stroke-width="1.5" stroke-linejoin="round"/></svg>
<svg style="position:absolute;left:1288px;top:47px;" width="20" height="20" viewBox="0 0 20 20"><circle cx="7.3" cy="7.2" r="2.8" fill="#e3e9f6"/><path d="M10.6 4.7 A2.8 2.8 0 1 1 10.6 9.7 A4 4 0 0 0 10.6 4.7Z" fill="#e3e9f6"/><path d="M2 15.8 Q2 11.8 7.3 11.8 Q12.6 11.8 12.6 15.8 Z" fill="#e3e9f6"/><path d="M12.5 12 Q16.8 12.4 16.8 15.8 H14 Q14 13.5 12.5 12Z" fill="#e3e9f6"/></svg>
<svg style="position:absolute;left:1332px;top:47px;" width="20" height="20" viewBox="0 0 20 20"><path d="M10 2.8 Q14.6 3.3 14.6 8.8 V13.2 L16.4 15 V15.8 H3.6 V15 L5.4 13.2 V8.8 Q5.4 3.3 10 2.8Z" fill="#e3e9f6"/><rect x="8.6" y="16.4" width="2.8" height="1.6" rx="0.8" fill="#e3e9f6"/></svg>
<svg style="position:absolute;left:1376px;top:47px;" width="22" height="20" viewBox="0 0 22 20"><rect x="5" y="2" width="1.9" height="16" fill="#e3e9f6"/><path d="M7.8 3.2 L15 7.6 L7.8 12Z" fill="#e3e9f6"/></svg>
<svg style="position:absolute;left:1390px;top:42px;" width="17" height="13" viewBox="0 0 17 13"><rect x="1" y="0" width="14" height="12" rx="6" fill="#ee4040"/><text x="8" y="9.6" font-family="Liberation Sans" font-size="9.5" font-weight="700" fill="#fff" text-anchor="middle">9+</text></svg>
<svg style="position:absolute;left:1425px;top:47px;" width="20" height="20" viewBox="0 0 20 20"><path d="M6.5 3 H13.5 M7.6 3 V9.2 L5.6 11.6 H14.4 L12.4 9.2 V3" fill="none" stroke="#e3e9f6" stroke-width="1.4" stroke-linejoin="round"/><path d="M10 11.6 V17.5" stroke="#e3e9f6" stroke-width="1.5"/></svg>
<svg style="position:absolute;left:1468px;top:47px;" width="22" height="20" viewBox="0 0 22 20"><path d="M3.8 10 Q11.3 2.8 18.8 10 Q11.3 17.2 3.8 10Z" fill="none" stroke="#e3e9f6" stroke-width="1.5"/><circle cx="11.3" cy="10" r="2" fill="#e3e9f6"/></svg>
<svg style="position:absolute;left:12px;top:85px;" width="18" height="20" viewBox="0 0 18 20"><path d="M5 4 L12 10.4 L5 17" fill="none" stroke="#222" stroke-width="2.4"/></svg>
<svg style="position:absolute;left:243px;top:113px;" width="18" height="11" viewBox="0 0 18 11"><path d="M1 1.5 H17 L9 9.8Z" fill="#333"/></svg>
<svg style="position:absolute;left:1330px;top:110px;" width="20" height="20" viewBox="0 0 20 20"><rect x="3.2" y="3.8" width="13.6" height="13.2" rx="1.2" fill="none" stroke="#333" stroke-width="2"/><rect x="3" y="3.4" width="14" height="3.6" fill="#333"/><rect x="5.6" y="1.8" width="1.8" height="2.6" fill="#333"/><rect x="12.6" y="1.8" width="1.8" height="2.6" fill="#333"/><rect x="10.2" y="11" width="4" height="3.6" fill="#333"/></svg>
<svg style="position:absolute;left:1370px;top:110px;" width="20" height="20" viewBox="0 0 20 20"><rect x="6" y="2.6" width="11.5" height="11.5" rx="1.2" fill="none" stroke="#333" stroke-width="1.8"/><path d="M2.9 6.4 V16.2 Q2.9 17.3 4 17.3 H13.6" fill="none" stroke="#333" stroke-width="1.8"/><path d="M8.4 8.3 L10.8 10.6 L15 6.3" fill="none" stroke="#333" stroke-width="1.5"/></svg>
<svg style="position:absolute;left:1410px;top:110px;" width="20" height="20" viewBox="0 0 20 20"><path d="M14.98 7.66 L17.45 8.49 L17.45 11.51 L14.98 12.34 L15.18 11.86 L16.33 14.20 L14.20 16.33 L11.86 15.18 L12.34 14.98 L11.51 17.45 L8.49 17.45 L7.66 14.98 L8.14 15.18 L5.80 16.33 L3.67 14.20 L4.82 11.86 L5.02 12.34 L2.55 11.51 L2.55 8.49 L5.02 7.66 L4.82 8.14 L3.67 5.80 L5.80 3.67 L8.14 4.82 L7.66 5.02 L8.49 2.55 L11.51 2.55 L12.34 5.02 L11.86 4.82 L14.20 3.67 L16.33 5.80 L15.18 8.14Z" fill="none" stroke="#333" stroke-width="1.7" stroke-linejoin="round"/><circle cx="10" cy="10" r="2.3" fill="none" stroke="#333" stroke-width="1.7"/></svg>
<svg style="position:absolute;left:1450px;top:110px;" width="20" height="20" viewBox="0 0 20 20"><path d="M15.6 6.6 A6.6 6.6 0 1 0 16.6 11.2" fill="none" stroke="#333" stroke-width="2"/><path d="M17.4 2.6 V9 H11 Z" fill="#333"/></svg>
<svg style="position:absolute;left:1444px;top:104px;" width="32" height="32" viewBox="0 0 32 32"><rect x="0.5" y="0.5" width="31" height="31" fill="none" stroke="#333" stroke-width="1" stroke-dasharray="2.2 1.1"/></svg>
<svg style="position:absolute;left:1254px;top:175px;" width="20" height="20" viewBox="0 0 20 20"><path d="M3 4.8 Q3 3 4.8 3 H9.6 L17.6 11 Q18.4 11.8 17.6 12.6 L12.6 17.6 Q11.8 18.4 11 17.6 L3 9.6Z" fill="none" stroke="#333" stroke-width="1.6" stroke-linejoin="round"/><rect x="-2.6" y="-1.5" width="5.2" height="3" rx="0.6" transform="translate(10.3 9.3) rotate(45)" fill="none" stroke="#333" stroke-width="1.1"/></svg>
<svg style="position:absolute;left:1340px;top:175px;" width="18" height="20" viewBox="0 0 18 20"><path d="M2.6 2.8 H15.4 L10.2 9.6 V17.4 L7.8 15.6 V9.6Z" fill="none" stroke="#333" stroke-width="1.6" stroke-linejoin="round"/></svg>
<svg style="position:absolute;left:1416px;top:175px;" width="20" height="20" viewBox="0 0 20 20"><rect x="3.2" y="3.6" width="15" height="12.2" rx="1.4" fill="none" stroke="#333" stroke-width="1.7"/><path d="M3.6 4.6 L10.7 10 L17.8 4.6" fill="none" stroke="#333" stroke-width="1.5"/></svg>
<div style="position:absolute;left:10px;top:529px;width:13px;height:1px;background:#dadce0"></div>
<svg style="position:absolute;left:1056px;top:414px;" width="12" height="12" viewBox="0 0 12 12"><path d="M1.8 6.4 L4.6 10.2 L10.4 2" fill="none" stroke="#5580d0" stroke-width="1.4"/></svg>
<div style="position:absolute;left:2px;top:668px;width:1499px;height:1px;background:#8fa0b3"></div>
<div style="position:absolute;left:0px;top:662px;width:3px;height:7px;background:#1a8ee8"></div>
<div style="position:absolute;left:1494px;top:666px;width:7px;height:3px;background:#1565e0"></div>
</body></html>
